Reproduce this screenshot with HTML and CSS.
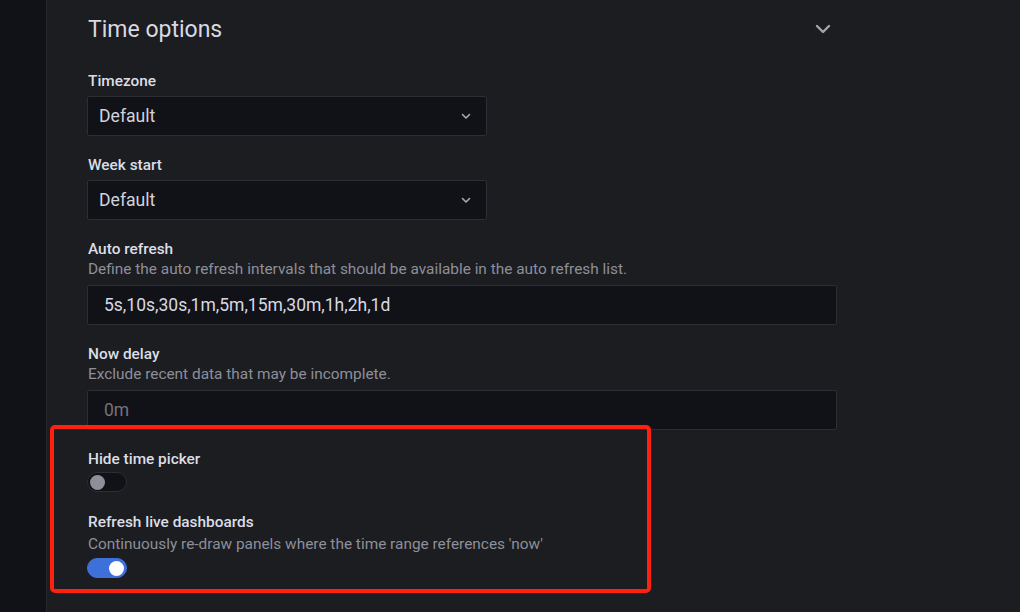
FILE: index.html
```html
<!DOCTYPE html>
<html>
<head>
<meta charset="utf-8">
<link rel="stylesheet" href="styles.css">
</head>
<body>
<div class="layout">
  <aside class="sidebar"></aside>
  <main class="main">
    <section class="section">
      <header class="section-header">
        <h2 class="section-title">Time options</h2>
        <svg class="collapse-icon" width="16" height="10" viewBox="0 0 16 10"><path d="M2 2 L8 8 L14 2" fill="none" stroke="#a4a5ae" stroke-width="2.4" stroke-linecap="round" stroke-linejoin="round"/></svg>
      </header>

      <div class="field">
        <div class="label">Timezone</div>
        <div class="select">
          <span>Default</span>
          <svg class="select-caret" width="10" height="7" viewBox="0 0 10 7"><path d="M1.5 1.5 L5 5 L8.5 1.5" fill="none" stroke="#a9aab2" stroke-width="1.6" stroke-linecap="round" stroke-linejoin="round"/></svg>
        </div>
      </div>

      <div class="field">
        <div class="label">Week start</div>
        <div class="select">
          <span>Default</span>
          <svg class="select-caret" width="10" height="7" viewBox="0 0 10 7"><path d="M1.5 1.5 L5 5 L8.5 1.5" fill="none" stroke="#a9aab2" stroke-width="1.6" stroke-linecap="round" stroke-linejoin="round"/></svg>
        </div>
      </div>

      <div class="field">
        <div class="label">Auto refresh</div>
        <div class="desc">Define the auto refresh intervals that should be available in the auto refresh list.</div>
        <div class="input">5s,10s,30s,1m,5m,15m,30m,1h,2h,1d</div>
      </div>

      <div class="field">
        <div class="label">Now delay</div>
        <div class="desc">Exclude recent data that may be incomplete.</div>
        <div class="input placeholder">0m</div>
      </div>

      <div class="field field-switch">
        <div class="label">Hide time picker</div>
        <div class="switch"><span class="knob"></span></div>
      </div>

      <div class="field">
        <div class="label">Refresh live dashboards</div>
        <div class="desc desc-spaced">Continuously re-draw panels where the time range references 'now'</div>
        <div class="switch on"><span class="knob"></span></div>
      </div>
    </section>
    <div class="highlight"></div>
  </main>
</div>
</body>
</html>
```

FILE: styles.css
```css
* { box-sizing: border-box; }
html, body {
  margin: 0;
  height: 100%;
  background: #1b1d21;
  font-family: Roboto, "Liberation Sans", sans-serif;
  color: #ccccdc;
  overflow: hidden;
}
.layout {
  display: flex;
  height: 612px;
}
.sidebar {
  width: 47px;
  flex: none;
  background: #111217;
  border-right: 1px solid #26282d;
}
.main {
  position: relative;
  flex: 1;
  padding-left: 40px;
}
.section {
  width: 750px;
}
.section-header {
  display: flex;
  align-items: center;
  justify-content: space-between;
  height: 58px;
  margin-bottom: 13px;
  padding-right: 6px;
}
.section-title {
  margin: 0;
  font-size: 23px;
  font-weight: 400;
  color: #d8d9e2;
  padding-left: 1px;
}
.field {
  margin-bottom: 19px;
}
.field-switch {
  margin-bottom: 20px;
}
.label {
  font-size: 15.4px;
  font-weight: 500;
  line-height: 20px;
  color: #dcdde6;
  padding-left: 1px;
}
.desc {
  font-size: 15.4px;
  line-height: 20px;
  color: #8e8f9a;
  padding-left: 1px;
}
.desc-spaced { margin-top: 2px; }
.label + .select { margin-top: 5px; }
.label + .switch { margin-top: 3px; }
.desc + .input { margin-top: 6px; }
.desc + .switch { margin-top: 4px; }
.select {
  width: 400px;
  height: 40px;
  background: #111217;
  border: 1px solid #2c2e33;
  border-radius: 2px;
  display: flex;
  align-items: center;
  justify-content: space-between;
  padding: 0 15px 0 11px;
  font-size: 17.6px;
  color: #d2d3dc;
}
.input {
  width: 750px;
  height: 40px;
  background: #111217;
  border: 1px solid #2c2e33;
  border-radius: 2px;
  display: flex;
  align-items: center;
  padding: 0 16px;
  font-size: 17.5px;
  color: #d8d9e2;
}
.input.placeholder { color: #72737d; }
.switch {
  width: 40px;
  height: 20px;
  border-radius: 10px;
  background: #111217;
  border: 1px solid #2c2e33;
  display: flex;
  align-items: center;
  padding: 0 2px;
}
.knob {
  width: 15px;
  height: 15px;
  border-radius: 50%;
  background: #8f8f99;
}
.switch.on {
  background: #3d71d9;
  border-color: #3d71d9;
  justify-content: flex-end;
}
.switch.on .knob { background: #ffffff; }
.highlight {
  position: absolute;
  left: 3px;
  top: 425px;
  width: 601px;
  height: 168px;
  border: 4px solid #ff2010;
  border-radius: 5px;
  pointer-events: none;
}
```
